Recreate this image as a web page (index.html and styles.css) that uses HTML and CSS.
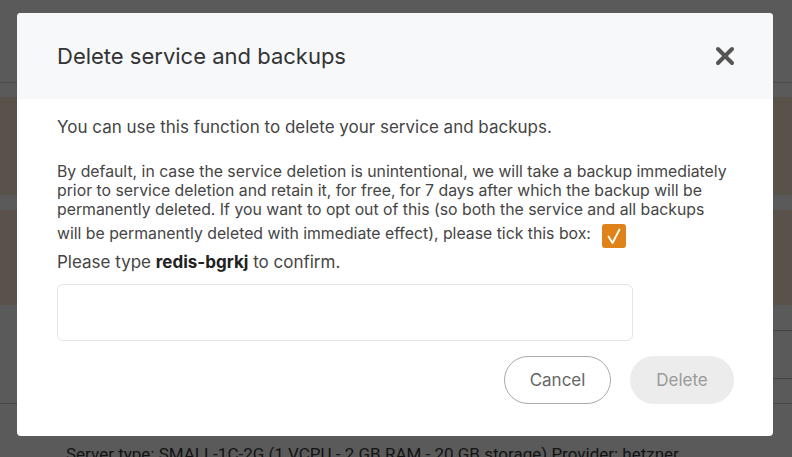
FILE: index.html
```html
<!DOCTYPE html>
<html lang="en">
<head>
<meta charset="utf-8">
<title>Delete service</title>
<link rel="stylesheet" href="styles.css">
</head>
<body>
<div class="page">
  <div class="nav"></div>
  <div class="gap-row"></div>
  <div class="alert"></div>
  <div class="gap-row small"></div>
  <div class="alert second"></div>
  <div class="table-area">
    <div class="tline one"></div>
    <div class="tline two"></div>
  </div>
  <div class="info">Server type: SMALL-1C-2G (1 VCPU - 2 GB RAM - 20 GB storage) Provider: hetzner</div>
</div>
<div class="overlay"></div>
<div class="modal">
  <div class="modal-header">
    <h2 class="modal-title">Delete service and backups</h2>
    <button class="close" aria-label="Close">
      <svg width="20" height="20" viewBox="0 0 20 20"><path d="M3 3 L17 17 M17 3 L3 17" stroke="#555" stroke-width="4" stroke-linecap="round" fill="none"/></svg>
    </button>
  </div>
  <div class="modal-body">
    <p class="lead">You can use this function to delete your service and backups.</p>
    <p class="desc">By default, in case the service deletion is unintentional, we will take a backup immediately<br>prior to service deletion and retain it, for free, for 7 days after which the backup will be<br>permanently deleted. If you want to opt out of this (so both the service and all backups<br>will be permanently deleted with immediate effect), please tick this box: <span class="check"><svg width="24" height="24" viewBox="0 0 24 24"><path d="M6.5 12.5 L10.5 19 L17.5 5.5" stroke="#fff" stroke-width="1.8" stroke-linecap="round" stroke-linejoin="round" fill="none"/></svg></span></p>
    <p class="confirm">Please type <strong>redis-bgrkj</strong> to confirm.</p>
    <input class="field" type="text">
    <div class="actions">
      <button class="btn cancel">Cancel</button>
      <button class="btn delete">Delete</button>
    </div>
  </div>
</div>
</body>
</html>
```
FILE: styles.css
```css
html, body {
  margin: 0;
  padding: 0;
}
body {
  width: 792px;
  height: 457px;
  overflow: hidden;
  font-family: Inter, "Noto Sans", sans-serif;
  background: #fff;
}
.page {
  width: 792px;
}
.nav {
  height: 82px;
  border-bottom: 1px solid #d4d4d4;
}
.gap-row {
  height: 14px;
}
.gap-row.small {
  height: 15px;
}
.alert {
  height: 98px;
  background: #f9e8d2;
}
.alert.second {
  height: 95px;
}
.table-area {
  position: relative;
  height: 98px;
  border-bottom: 1px solid #c8c8c8;
}
.tline {
  position: absolute;
  left: 600px;
  right: 0;
  height: 1px;
  background: #c0c0c0;
}
.tline.one { top: 25px; }
.tline.two { top: 73px; }
.info {
  padding: 40px 0 0 66px;
  font-family: Roboto, sans-serif;
  font-size: 17px;
  color: #3a3a3a;
  white-space: nowrap;
}
.overlay {
  position: fixed;
  inset: 0;
  background: rgba(0, 0, 0, 0.647);
}
.modal {
  position: fixed;
  top: 13px;
  left: 17px;
  width: 756px;
  height: 423px;
  background: #fff;
  border-radius: 4px;
  overflow: hidden;
}
.modal-header {
  height: 86px;
  background: #f7f8fa;
  display: flex;
  align-items: center;
  justify-content: space-between;
  padding: 0 38px 0 40px;
}
.modal-title {
  margin: 0;
  font-size: 22px;
  font-weight: 400;
  color: #333;
  line-height: 26px;
}
.close {
  border: 0;
  background: transparent;
  padding: 0;
  width: 20px;
  height: 20px;
  display: flex;
}
.modal-body {
  padding: 19px 39px 33px 40px;
  color: #454545;
  font-size: 17px;
  line-height: 19px;
}
.modal-body p {
  margin: 0;
}
.desc {
  margin-top: 25px !important;
  margin-right: -20px !important;
  font-size: 15.8px;
}
.check {
  display: inline-block;
  width: 24px;
  height: 24px;
  margin: 5px 0 3px 7px;
  background: #e0821a;
  border-radius: 3px;
  vertical-align: middle;
}
.check svg {
  display: block;
}
.confirm {
  margin-top: 2px !important;
}
.confirm strong {
  font-weight: 700;
  color: #222;
}
.field {
  display: block;
  box-sizing: border-box;
  margin-top: 12px;
  width: 576px;
  height: 57px;
  border: 1px solid #e4e4e4;
  border-radius: 6px;
  outline: none;
}
.actions {
  margin-top: 15px;
  display: flex;
  justify-content: flex-end;
  gap: 19px;
}
.btn {
  height: 48px;
  border-radius: 24px;
  font-family: Inter, sans-serif;
  font-size: 17px;
  padding: 0;
}
.cancel {
  width: 107px;
  background: #fff;
  border: 1px solid #aaa;
  color: #666;
}
.delete {
  width: 104px;
  background: #ececec;
  border: 0;
  color: #9a9a9a;
}
```
